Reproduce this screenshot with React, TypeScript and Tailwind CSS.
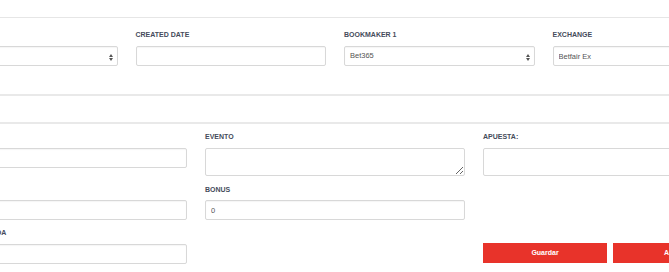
import React from 'react';

const labelCls = 'block text-[7px] leading-[10px] font-bold uppercase text-[#454b5b] whitespace-nowrap';
const inputCls =
  'block w-full h-[20px] rounded-[2px] border border-[#d8d8d8] bg-white px-[5px] text-[7.5px] text-[#555] shadow-[inset_0_1px_1px_rgba(0,0,0,0.04)] outline-none';
const areaCls =
  'block w-full h-[28px] rounded-[2px] border border-[#d8d8d8] bg-white px-[5px] py-[3px] text-[7.5px] text-[#555] outline-none';

const SelectArrows: React.FC = () => (
  <svg width="4" height="7" viewBox="0 0 4 7" className="absolute right-[4px] top-[7px]">
    <path d="M0 3 L2 0 L4 3 Z" fill="#555" />
    <path d="M0 4 L2 7 L4 4 Z" fill="#555" />
  </svg>
);

const FakeSelect: React.FC<{ value?: string }> = ({ value }) => (
  <div className={`relative flex items-center ${inputCls}`}>
    <span>{value}</span>
    <SelectArrows />
  </div>
);

const App: React.FC = () => {
  return (
    <div
      className="w-[669px] h-[272px] overflow-hidden bg-white"
      style={{ fontFamily: '"Liberation Sans", Arial, sans-serif' }}
    >
      <div className="pt-[17px] border-b border-[#e6e6e6]" />

      {/* Top section */}
      <div className="-ml-[73px] w-[816px] pt-[12px]">
        <div className="grid grid-cols-4 gap-x-[18px]">
          <div>
            <label className={`${labelCls} mb-[6px]`}>Tipster</label>
            <FakeSelect />
          </div>
          <div>
            <label className={`${labelCls} mb-[6px]`}>Created Date</label>
            <input type="text" className={inputCls} />
          </div>
          <div>
            <label className={`${labelCls} mb-[6px]`}>Bookmaker 1</label>
            <FakeSelect value="Bet365" />
          </div>
          <div>
            <label className={`${labelCls} mb-[6px]`}>Exchange</label>
            <input type="text" defaultValue="Betfair Ex" className={inputCls} />
          </div>
        </div>
      </div>

      <div className="mt-[28px] border-t-2 border-[#e9e9e9]" />
      <div className="mt-[26px] border-t-2 border-[#e9e9e9]" />

      {/* Bottom section */}
      <div className="-ml-[73px] w-[816px] pt-[8px]">
        <div className="grid grid-cols-3 gap-x-[18px] items-start">
          <div>
            <label className={`${labelCls} mb-[6px]`}>Partido</label>
            <input type="text" className={inputCls} />
          </div>
          <div>
            <label className={`${labelCls} mb-[6px]`}>Evento</label>
            <textarea className={areaCls} />
          </div>
          <div>
            <label className={`${labelCls} mb-[6px]`}>Apuesta:</label>
            <textarea className={areaCls} />
          </div>
        </div>

        <div className="grid grid-cols-3 gap-x-[18px] items-start mt-[9px]">
          <div>
            <label className={`${labelCls} mb-[5px]`}>Cuota</label>
            <input type="text" className={inputCls} />
          </div>
          <div>
            <label className={`${labelCls} mb-[5px]`}>Bonus</label>
            <input type="text" defaultValue="0" className={inputCls} />
          </div>
          <div />
        </div>

        <div className="grid grid-cols-3 gap-x-[18px] items-start mt-[8px]">
          <div>
            <label className={`${labelCls} mb-[6px] tracking-[0.15px]`}>Cantidad apostada</label>
            <input type="text" className={inputCls} />
          </div>
          <div />
          <div className="flex gap-[6px] pt-[15px]">
            <button className="w-[124px] h-[20px] bg-[#e8332a] text-white text-[7px] font-bold">
              Guardar
            </button>
            <button className="w-[124px] h-[20px] bg-[#e8332a] text-white text-[7px] font-bold">
              Anular
            </button>
          </div>
        </div>
      </div>
    </div>
  );
};

export default App;
